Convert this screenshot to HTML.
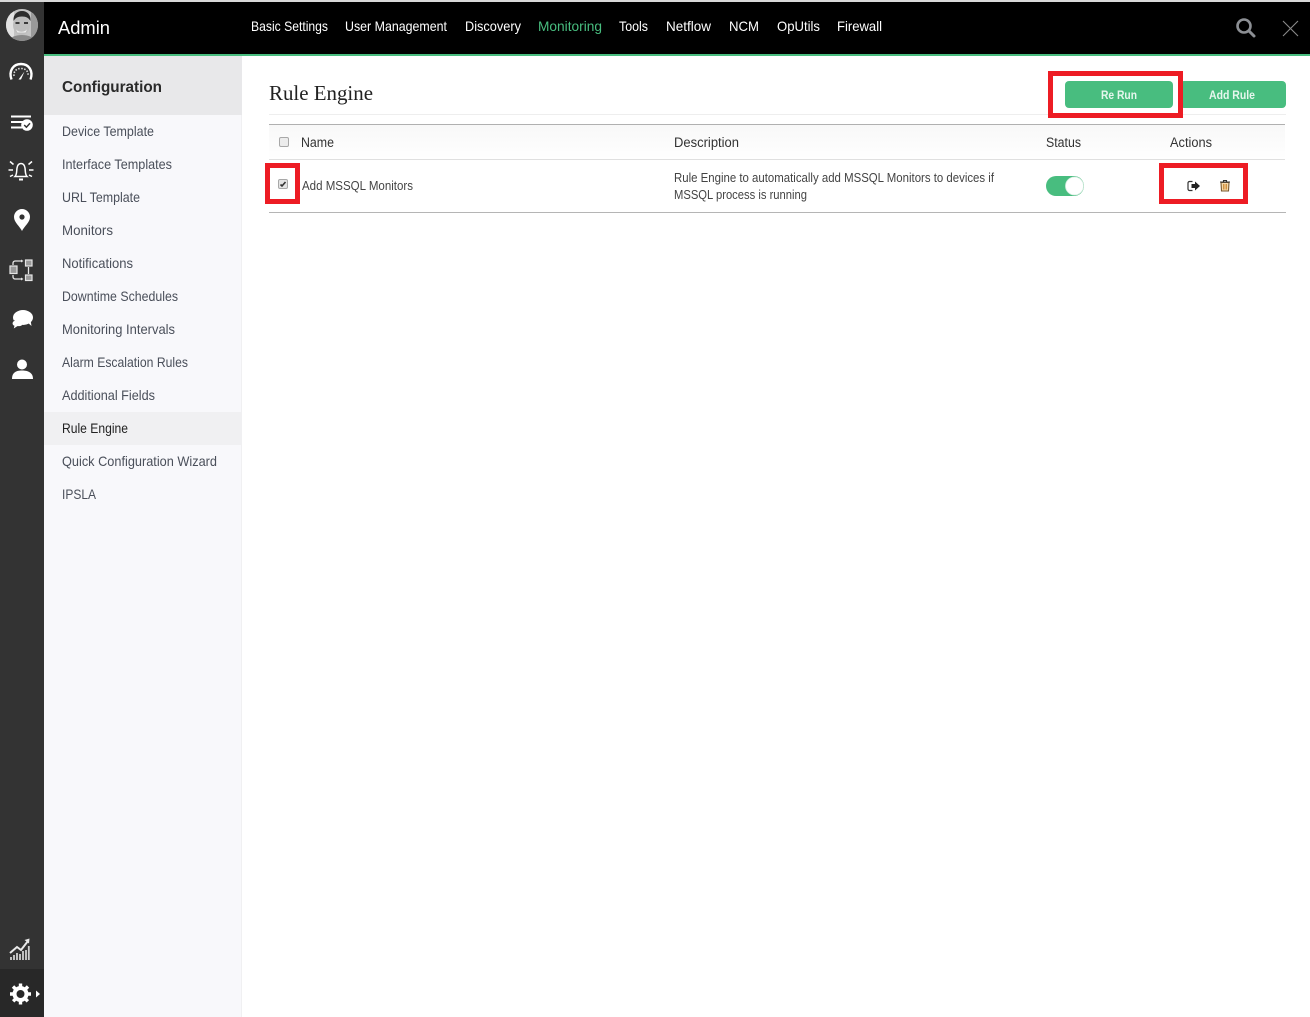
<!DOCTYPE html>
<html lang="en">
<head>
<meta charset="utf-8">
<title>Rule Engine</title>
<style>
html,body{margin:0;padding:0;background:#fff;width:1310px;height:1017px;overflow:hidden}
svg{display:block}
text{font-family:"Liberation Sans",sans-serif}
.n{font-size:14px;fill:#fff}
.s{font-size:14px;fill:#4a4f5a}
.h{font-size:13.5px;fill:#333}
.r{font-size:12.5px;fill:#444}
</style>
</head>
<body>
<svg width="1310" height="1017" viewBox="0 0 1310 1017" xmlns="http://www.w3.org/2000/svg">
<defs>
<linearGradient id="hd" x1="0" y1="0" x2="0" y2="1"><stop offset="0" stop-color="#f8f8f8"/><stop offset="1" stop-color="#fff"/></linearGradient>
<clipPath id="av"><circle cx="22" cy="25" r="16"/></clipPath>
</defs>
<rect width="1310" height="1017" fill="#fff"/>

<!-- header -->
<rect x="0" y="0" width="1310" height="2" fill="#d8d8d8"/>
<rect x="44" y="2" width="1266" height="52" fill="#000"/>
<rect x="44" y="54" width="1266" height="2" fill="#48bd7f"/>
<text x="58" y="34" style="font-size:18px;fill:#fff" textLength="52" lengthAdjust="spacingAndGlyphs">Admin</text>
<text class="n" x="251" y="31" textLength="77" lengthAdjust="spacingAndGlyphs">Basic Settings</text>
<text class="n" x="345" y="31" textLength="102" lengthAdjust="spacingAndGlyphs">User Management</text>
<text class="n" x="465" y="31" textLength="56" lengthAdjust="spacingAndGlyphs">Discovery</text>
<text class="n" x="538" y="31" textLength="64" lengthAdjust="spacingAndGlyphs" style="fill:#48bd7f">Monitoring</text>
<text class="n" x="619" y="31" textLength="29" lengthAdjust="spacingAndGlyphs">Tools</text>
<text class="n" x="666" y="31" textLength="45" lengthAdjust="spacingAndGlyphs">Netflow</text>
<text class="n" x="729" y="31" textLength="30" lengthAdjust="spacingAndGlyphs">NCM</text>
<text class="n" x="777" y="31" textLength="43" lengthAdjust="spacingAndGlyphs">OpUtils</text>
<text class="n" x="837" y="31" textLength="45" lengthAdjust="spacingAndGlyphs">Firewall</text>
<!-- search / close -->
<circle cx="1244" cy="26" r="6.5" fill="none" stroke="#8c8f94" stroke-width="2.6"/>
<path d="M1249 31l5 5" stroke="#8c8f94" stroke-width="3" stroke-linecap="round"/>
<path d="M1283 21l15 15M1298 21l-15 15" stroke="#8a8a8a" stroke-width="1.1"/>

<!-- left rail -->
<rect x="0" y="2" width="44" height="1015" fill="#333"/>
<rect x="0" y="969" width="44" height="48" fill="#282828"/>
<!-- avatar -->
<g clip-path="url(#av)">
<rect x="6" y="9" width="32" height="32" fill="#c4c4c4"/>
<rect x="6" y="9" width="8" height="32" fill="#e2e2e2"/>
<rect x="31" y="9" width="7" height="32" fill="#9a9a9a"/>
<ellipse cx="21.500" cy="25" rx="8.500" ry="10" fill="#bdbdbd"/>
<path d="M13.500 21c-.5-6 3-10 8.500-10s9 4 8.500 10c-2-3-4-4.500-8.500-4.500s-6.500 1.500-8.500 4.500z" fill="#2c2c2c"/>
<path d="M16 29.500c3 3 8 3 11 0l-1.500 3h-8z" fill="#efefef"/>
<rect x="15.500" y="22" width="4" height="2" fill="#3a3a3a"/><rect x="24" y="22" width="4" height="2" fill="#3a3a3a"/>
<path d="M8 41c2-4 8-6 14-6s11 2 14 6z" fill="#8a8a8a"/>
</g>
<!-- gauge -->
<path d="M11.500 79.500C8.500 71 13 64 21 64s12.500 7 9.500 15.500" fill="none" stroke="#fff" stroke-width="2.400"/>
<path d="M14 76c-.5-5 2.500-7.500 7-7.500s7.500 2.500 7 7.500" fill="none" stroke="#ddd" stroke-width="1.600" stroke-dasharray="1.500 1.500"/>
<path d="M24.500 71.500L21 79.500h-2.500z" fill="#fff"/>
<!-- list check -->
<path d="M11 116.500h20M11 122h14M11 127.500h11" stroke="#fff" stroke-width="2"/>
<circle cx="27" cy="125" r="5.800" fill="#fff"/>
<path d="M24.200 125l2.200 2.200 3.600-4" fill="none" stroke="#333" stroke-width="1.500"/>
<!-- bell -->
<path d="M15 176.500c2-2 1.500-5 2-8.500 .5-3 2-4.500 4-4.500s3.500 1.500 4 4.500c.5 3.500 0 6.500 2 8.500z" fill="none" stroke="#fff" stroke-width="1.500"/>
<path d="M19 178.500h4v2h-4z" fill="#fff"/>
<path d="M10 161.500l3.500 3M32 161.500l-3.500 3M8.500 170h4.500M29 170h4.500M10 176.500l3-1.500M32 176.500l-3-1.500" stroke="#fff" stroke-width="1.500"/>
<!-- pin -->
<path d="M22 231c-2-4.500-8-8.500-8-14a8 8 0 0 1 16 0c0 5.500-6 9.500-8 14z" fill="#fff"/>
<circle cx="22" cy="217" r="2.600" fill="#333"/>
<!-- network -->
<rect x="10" y="266" width="7" height="7.500" fill="#999" stroke="#e4e4e4" stroke-width="1.200"/>
<rect x="25.500" y="260" width="6.500" height="6" fill="#999" stroke="#e4e4e4" stroke-width="1.200"/>
<rect x="25.500" y="275" width="6.500" height="5.500" fill="#999" stroke="#e4e4e4" stroke-width="1.200"/>
<path d="M13 265v-2c0-1 1-2 2-2h7M13 275v2c0 1 1 2 2 2h7M28.500 267v7" fill="none" stroke="#e4e4e4" stroke-width="1.300"/>
<path d="M21 259.500l2.500 1.500-2.500 1.500zM21 277.500l2.500 1.500-2.500 1.500z" fill="#e4e4e4"/>
<!-- chat -->
<ellipse cx="23" cy="317.500" rx="10" ry="7.500" fill="#fff"/>
<path d="M27 322l4.500 4-1-6z" fill="#fff"/>
<path d="M14.500 320.500c-3 1-3 4.500-.5 5.500l-.8 3.300 4.300-2.800c2 .2 4-.3 5.300-1.500" fill="#fff" stroke="#333" stroke-width=".8"/>
<!-- person -->
<circle cx="22" cy="364.500" r="5" fill="#fff"/>
<path d="M12 379c0-6.500 4-8.500 10-8.500s11 2 11 8.500z" fill="#fff"/>
<!-- chart -->
<path d="M10 953l7-6 4 3 7-9" fill="none" stroke="#e8e8e8" stroke-width="2"/>
<path d="M24.500 940l5-1.500-.5 5z" fill="#e8e8e8"/>
<path d="M11 960v-3M14 960v-5M17 960v-7M20 960v-6M23 960v-9M26 960v-10M28.800 960v-14" stroke="#cfcfcf" stroke-width="1.800"/>
<!-- gear -->
<circle cx="20.500" cy="994" r="6" fill="none" stroke="#fff" stroke-width="4"/>
<path d="M20.500 983.500v21M10 994h21M13 986.500l15 15M28 986.500l-15 15" stroke="#fff" stroke-width="3.400" stroke-dasharray="3.200 14.600"/>
<path d="M36 990.500l4 3.500-4 3.500z" fill="#fff"/>

<!-- sidebar -->
<rect x="44" y="56" width="197" height="961" fill="#f8f8fb"/>
<rect x="241" y="56" width="1" height="961" fill="#f0f0f2"/>
<rect x="44" y="56" width="198" height="59" fill="#e8e8ea"/>
<rect x="44" y="412" width="197" height="33" fill="#f0f0f2"/>
<text x="62" y="92" style="font-size:16px;font-weight:bold;fill:#2a2a2a" textLength="100" lengthAdjust="spacingAndGlyphs">Configuration</text>
<text class="s" x="62" y="136" textLength="92" lengthAdjust="spacingAndGlyphs">Device Template</text>
<text class="s" x="62" y="169" textLength="110" lengthAdjust="spacingAndGlyphs">Interface Templates</text>
<text class="s" x="62" y="202" textLength="78" lengthAdjust="spacingAndGlyphs">URL Template</text>
<text class="s" x="62" y="235" textLength="51" lengthAdjust="spacingAndGlyphs">Monitors</text>
<text class="s" x="62" y="268" textLength="71" lengthAdjust="spacingAndGlyphs">Notifications</text>
<text class="s" x="62" y="301" textLength="116" lengthAdjust="spacingAndGlyphs">Downtime Schedules</text>
<text class="s" x="62" y="334" textLength="113" lengthAdjust="spacingAndGlyphs">Monitoring Intervals</text>
<text class="s" x="62" y="367" textLength="126" lengthAdjust="spacingAndGlyphs">Alarm Escalation Rules</text>
<text class="s" x="62" y="400" textLength="93" lengthAdjust="spacingAndGlyphs">Additional Fields</text>
<text class="s" x="62" y="433" textLength="66" lengthAdjust="spacingAndGlyphs" style="fill:#222">Rule Engine</text>
<text class="s" x="62" y="466" textLength="155" lengthAdjust="spacingAndGlyphs">Quick Configuration Wizard</text>
<text class="s" x="62" y="499" textLength="34" lengthAdjust="spacingAndGlyphs">IPSLA</text>

<!-- title -->
<text x="269" y="100" style="font-family:'Liberation Serif',serif;font-size:21px;fill:#222" textLength="104" lengthAdjust="spacingAndGlyphs">Rule Engine</text>
<rect x="269" y="114" width="1017" height="1" fill="#eee"/>

<!-- buttons -->
<rect x="1180" y="81" width="106" height="27" rx="4" fill="#48bd7f"/>
<rect x="1065" y="81" width="108" height="27" rx="4" fill="#48bd7f"/>
<text x="1101" y="99" style="font-size:11.500px;font-weight:bold;fill:#e6f7ee" textLength="36" lengthAdjust="spacingAndGlyphs">Re Run</text>
<text x="1209" y="99" style="font-size:11.500px;font-weight:bold;fill:#e6f7ee" textLength="46" lengthAdjust="spacingAndGlyphs">Add Rule</text>

<!-- table -->
<rect x="269" y="125" width="1016" height="34" fill="url(#hd)"/>
<rect x="269" y="124" width="1016" height="1" fill="#b0b0b0"/>
<rect x="269" y="159" width="1016" height="1" fill="#e0e0e0"/>
<rect x="269" y="212" width="1017" height="1" fill="#b5b5b5"/>
<rect x="279.500" y="137.500" width="9" height="9" rx="1.500" fill="#ececec" stroke="#a8a8a8"/>
<text class="h" x="301" y="147" textLength="33" lengthAdjust="spacingAndGlyphs">Name</text>
<text class="h" x="674" y="147" textLength="65" lengthAdjust="spacingAndGlyphs">Description</text>
<text class="h" x="1046" y="147" textLength="35" lengthAdjust="spacingAndGlyphs">Status</text>
<text class="h" x="1170" y="147" textLength="42" lengthAdjust="spacingAndGlyphs">Actions</text>
<rect x="278.500" y="179.500" width="9" height="9" rx="1.500" fill="#e4e4e4" stroke="#a8a8a8"/>
<path d="M280.500 184.500l1.500 1.500 3.500-4" fill="none" stroke="#333" stroke-width="1.600"/>
<text class="r" x="302" y="190" textLength="111" lengthAdjust="spacingAndGlyphs">Add MSSQL Monitors</text>
<text class="r" x="674" y="182" textLength="320" lengthAdjust="spacingAndGlyphs">Rule Engine to automatically add MSSQL Monitors to devices if</text>
<text class="r" x="674" y="199" textLength="133" lengthAdjust="spacingAndGlyphs">MSSQL process is running</text>
<!-- toggle -->
<rect x="1046" y="176" width="38" height="20" rx="10" fill="#48bd7f"/>
<circle cx="1074.500" cy="186" r="9" fill="#fff" stroke="#d6ece0" stroke-width=".8"/>
<!-- action icons -->
<path d="M1192.500 181.500h-3a1.500 1.500 0 0 0-1.500 1.500v6a1.500 1.500 0 0 0 1.500 1.500h3" fill="none" stroke="#333" stroke-width="1.200"/>
<path d="M1191.500 184h3.500v-2.500l5 4.500-5 4.500V188h-3.500z" fill="#222"/>
<path d="M1221 182.500h8l-.5 8.500h-7z" fill="#f6d9a8" stroke="#7a5a30" stroke-width="1.100"/>
<path d="M1220 182h10M1223.500 182v-1.500h3v1.500" fill="none" stroke="#333" stroke-width="1.100"/>
<path d="M1223.500 184v5.500M1225 184v5.500M1226.500 184v5.500" stroke="#c9802a" stroke-width=".8"/>

<!-- red annotation boxes -->
<rect x="1050.500" y="73.500" width="130" height="42" fill="none" stroke="#ed1c24" stroke-width="5"/>
<rect x="267.500" y="165.500" width="30" height="36" fill="none" stroke="#ed1c24" stroke-width="5"/>
<rect x="1161.500" y="165.500" width="84" height="36" fill="none" stroke="#ed1c24" stroke-width="5"/>
</svg>
</body>
</html>
